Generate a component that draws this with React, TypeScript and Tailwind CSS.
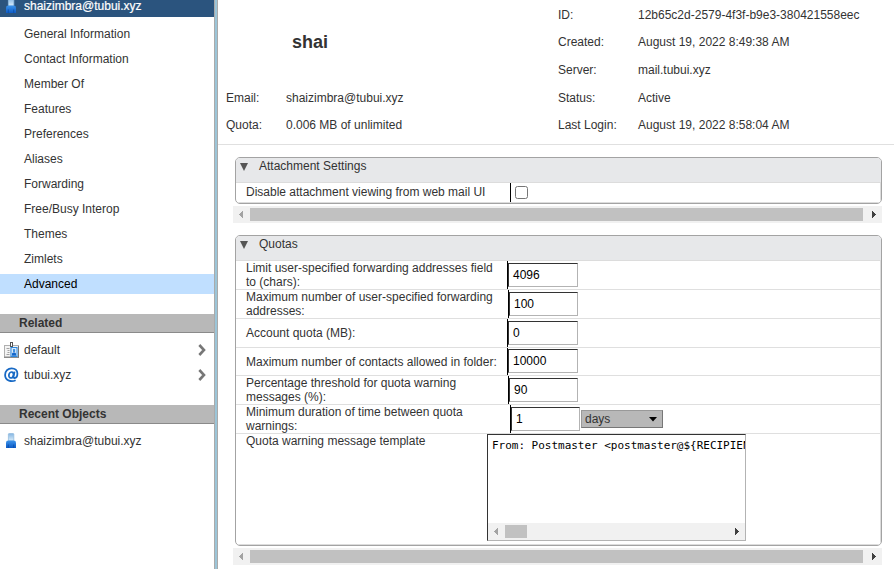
import React from 'react';

const navItems = [
  'General Information',
  'Contact Information',
  'Member Of',
  'Features',
  'Preferences',
  'Aliases',
  'Forwarding',
  'Free/Busy Interop',
  'Themes',
  'Zimlets',
  'Advanced',
];

function PersonIcon() {
  return (
    <svg width="12" height="16" viewBox="0 0 12 16" className="shrink-0">
      <defs>
        <linearGradient id="head" x1="0" y1="0" x2="0" y2="1">
          <stop offset="0" stopColor="#86b6e2" />
          <stop offset="1" stopColor="#dceefa" />
        </linearGradient>
        <linearGradient id="torso" x1="0" y1="0" x2="0" y2="1">
          <stop offset="0" stopColor="#3c93ea" />
          <stop offset="1" stopColor="#0d5bc6" />
        </linearGradient>
      </defs>
      <rect x="3.4" y="0.5" width="5.4" height="7.5" rx="0.8" fill="url(#head)" stroke="#94bde0" strokeWidth="0.8" />
      <path d="M1 10 Q1 7.6 3.2 7.6 H8.8 Q11 7.6 11 10 V15 H1 Z" fill="url(#torso)" />
      <path d="M3.3 11.5 V15 M8.7 11.5 V15" stroke="#0a4ba8" strokeWidth="0.8" />
    </svg>
  );
}

function BadgeIcon() {
  return (
    <svg width="16" height="16" viewBox="0 0 16 16" className="shrink-0">
      <rect x="0.5" y="3.5" width="14" height="11.5" fill="#f4f4f4" stroke="#b0b0b0" />
      <path d="M0 15.3 H15 M14.5 4 V15.5" stroke="#777" />
      <path d="M2.5 6.5 H5.5 M3.5 8.5 H5.5 M3.5 10.5 H5.5 M2.5 12.5 H5.5" stroke="#999" strokeWidth="0.9" />
      <rect x="7" y="5.6" width="6" height="8.8" fill="#fff" stroke="#2583dc" strokeWidth="1.1" />
      <rect x="8.8" y="7" width="2.5" height="3.2" rx="0.6" fill="#3f8fe0" />
      <path d="M8 13.8 V11.6 Q8 10.4 9.2 10.4 H10.9 Q12 10.4 12 11.6 V13.8 Z" fill="#1267cc" />
      <rect x="6.5" y="0.5" width="2" height="4" fill="#fff" stroke="#555" />
    </svg>
  );
}

function AtIcon() {
  return (
    <svg width="16" height="16" viewBox="0 0 16 16" className="shrink-0" fill="none" stroke="#1769c5">
      <path d="M11.6 13.2 C8 15.2 1.1 14.2 1.1 8 C1.1 4 4 1.3 7.6 1.3 C11 1.3 13.4 3.4 13.4 6.6 C13.4 9.4 12 11 10.6 11 C9.6 11 9.3 10.3 9.5 9.3 L10.6 4.6" strokeWidth="1.8" />
      <ellipse cx="7.2" cy="8" rx="2.3" ry="3" transform="rotate(14 7.2 8)" strokeWidth="1.7" />
    </svg>
  );
}

function Chevron() {
  return (
    <svg width="8" height="12" viewBox="0 0 8 12">
      <path d="M1.3 1 L6 6 L1.3 11" fill="none" stroke="#777" strokeWidth="2.6" />
    </svg>
  );
}

function Arrow({ dir }: { dir: 'left' | 'right' }) {
  return (
    <svg width="4" height="7" viewBox="0 0 4 7" className="shrink-0" shapeRendering="crispEdges">
      {dir === 'left' ? <path d="M4 0 V7 L0 3.5 Z" fill="#a3a3a3" /> : <path d="M0 0 V7 L4 3.5 Z" fill="#404040" />}
    </svg>
  );
}

function ScrollBar({ thumb }: { thumb: string }) {
  return (
    <div className="flex h-[17px] items-center bg-[#f1f1f1] pr-[6px] pl-[6px]">
      <Arrow dir="left" />
      <div className={`ml-[7px] h-[13px] bg-[#c1c1c1] ${thumb}`} />
      <div className="ml-auto flex">
        <Arrow dir="right" />
      </div>
    </div>
  );
}

function SectionTitle({ children }: { children: React.ReactNode }) {
  return (
    <div className="h-[19px] border-b border-[#8a8a8a] bg-[#b8b8b8] pl-[19px] leading-[18px] font-bold">{children}</div>
  );
}

function PanelHeader({ title, size }: { title: string; size: string }) {
  return (
    <div className={`flex border-b border-[#dcdcdc] bg-[#e7e8ea] pl-[4px] ${size}`}>
      <svg width="8" height="8" viewBox="0 0 8 8" className="mt-[5px]">
        <path d="M0 0 H8 L4 8 Z" fill="#555" />
      </svg>
      <span className="ml-[11px] leading-4">{title}</span>
    </div>
  );
}

function TextField({ value, width }: { value: string; width: string }) {
  return (
    <div
      className={`h-6 border border-t-[#333] border-r-[#b3b3b3] border-b-[#b3b3b3] border-l-[#333] bg-white pl-1 leading-[22px] text-black ${width}`}
    >
      {value}
    </div>
  );
}

type QuotaRow = { label: string[]; value: string; size: string; labelWidth: string; field: string; unit?: string };

const quotaRows: QuotaRow[] = [
  { label: ['Limit user-specified forwarding addresses field', 'to (chars):'], value: '4096', size: 'h-[29px]', labelWidth: 'w-[271px]', field: 'w-[70px]' },
  { label: ['Maximum number of user-specified forwarding', 'addresses:'], value: '100', size: 'h-[29px]', labelWidth: 'w-[272px]', field: 'w-[69px]' },
  { label: ['Account quota (MB):'], value: '0', size: 'h-[29px]', labelWidth: 'w-[271px]', field: 'w-[70px]' },
  { label: ['Maximum number of contacts allowed in folder:'], value: '10000', size: 'h-[28px]', labelWidth: 'w-[271px]', field: 'w-[70px]' },
  { label: ['Percentage threshold for quota warning', 'messages (%):'], value: '90', size: 'h-[29px]', labelWidth: 'w-[272px]', field: 'w-[69px]' },
  { label: ['Minimum duration of time between quota', 'warnings:'], value: '1', size: 'h-[29px]', labelWidth: 'w-[274px]', field: 'w-[69px]', unit: 'days' },
];

const account = [
  ['ID:', '12b65c2d-2579-4f3f-b9e3-380421558eec', 'h-[27px]'],
  ['Created:', 'August 19, 2022 8:49:38 AM', 'h-[28px]'],
  ['Server:', 'mail.tubui.xyz', 'h-[28px]'],
  ['Status:', 'Active', 'h-[27px]'],
  ['Last Login:', 'August 19, 2022 8:58:04 AM', 'h-[28px]'],
];

function Sidebar() {
  return (
    <aside className="w-[214px] shrink-0">
      <div className="flex h-[17px] items-end overflow-hidden bg-[#2b547e] pl-[5px] text-white">
        <div className="mb-[3px] flex">
          <PersonIcon />
        </div>
        <span className="mb-[3px] ml-[7px] leading-4 [-webkit-text-stroke:0.2px_white]">shaizimbra@tubui.xyz</span>
      </div>
      <nav className="mt-[7px] flex flex-col gap-[5px]">
        {navItems.map((item) => (
          <div
            key={item}
            className={`h-5 pl-6 leading-5 ${item === 'Advanced' ? 'bg-[#c0dfff] text-black' : ''}`}
          >
            {item}
          </div>
        ))}
      </nav>
      <div className="mt-5">
        <SectionTitle>Related</SectionTitle>
        <div className="mt-[7px] flex h-5 items-center pr-[8px] pl-1">
          <BadgeIcon />
          <span className="ml-1">default</span>
          <div className="ml-auto">
            <Chevron />
          </div>
        </div>
        <div className="mt-[5px] flex h-5 items-center pr-[8px] pl-1">
          <AtIcon />
          <span className="ml-1">tubui.xyz</span>
          <div className="ml-auto">
            <Chevron />
          </div>
        </div>
      </div>
      <div className="mt-5">
        <SectionTitle>Recent Objects</SectionTitle>
        <div className="mt-[7px] flex h-5 items-center pl-[5px]">
          <PersonIcon />
          <span className="ml-[7px]">shaizimbra@tubui.xyz</span>
        </div>
      </div>
    </aside>
  );
}

export default function App() {
  return (
    <div className="flex h-[569px] w-[894px] overflow-hidden bg-white font-['Liberation_Sans',Arial,sans-serif] text-[12px] leading-[14px] text-[#333]">
      <Sidebar />
      <div className="w-1 shrink-0 border-x border-[#aaa] bg-[#9cc5d8]" />
      <main className="min-w-0 flex-1">
        <header className="flex h-[145px] border-b border-[#e0e0e0]">
          <div className="w-[332px] pl-2">
            <h1 className="mt-[31px] pl-[66px] text-[18px] leading-[22px] font-bold">shai</h1>
            <div className="mt-[38px] flex h-[27px]">
              <span className="w-[60px]">Email:</span>
              <span>shaizimbra@tubui.xyz</span>
            </div>
            <div className="flex">
              <span className="w-[60px]">Quota:</span>
              <span>0.006 MB of unlimited</span>
            </div>
          </div>
          <div className="pt-2 pl-2">
            {account.map(([label, value, size]) => (
              <div key={label} className={`flex ${size}`}>
                <span className="w-20">{label}</span>
                <span>{value}</span>
              </div>
            ))}
          </div>
        </header>

        <section className="mt-3 ml-[17px] h-[47px] w-[647px] overflow-hidden rounded-[5px] border border-[#a3a3a3]">
          <PanelHeader title="Attachment Settings" size="h-[25px]" />
          <div className="flex h-5 border-r border-b border-[#dcdcdc]">
            <div className="w-[274px] pl-[10px] leading-[19px]">Disable attachment viewing from web mail UI</div>
            <div className="flex items-center border-l border-black pl-1">
              <div className="h-[13px] w-[13px] rounded-[2.5px] border border-[#767676] bg-white" />
            </div>
          </div>
        </section>
        <div className="mt-[2px] ml-[15px] w-[649px]">
          <ScrollBar thumb="w-[613px]" />
        </div>

        <section className="mt-3 ml-[17px] h-[311px] w-[647px] overflow-hidden rounded-[5px] border border-[#a3a3a3]">
          <PanelHeader title="Quotas" size="h-[25px]" />
          <div className="h-[284px] border-r border-b border-[#dcdcdc]">
            {quotaRows.map((row) => (
              <div key={row.value} className={`flex border-b border-[#dfdfdf] ${row.size}`}>
                <div className={`flex shrink-0 flex-col justify-center pl-[10px] whitespace-nowrap ${row.labelWidth}`}>
                  {row.label.map((line) => (
                    <span key={line}>{line}</span>
                  ))}
                </div>
                <div className="flex border-l border-black">
                  <div className={row.size === 'h-[28px]' ? 'pt-px' : 'pt-[2px]'}>
                    <TextField value={row.value} width={row.field} />
                  </div>
                  {row.unit && (
                    <div className="mt-[5px] ml-px flex h-[18px] w-[82px] items-center justify-between border border-t-[#999] border-r-[#777] border-b-[#777] border-l-[#999] bg-[#b8b8b8] pr-[5px] pl-[3px]">
                      <span>{row.unit}</span>
                      <svg width="8" height="5" viewBox="0 0 8 5">
                        <path d="M0 0 H8 L4 4.5 Z" fill="#000" />
                      </svg>
                    </div>
                  )}
                </div>
              </div>
            ))}
            <div className="flex">
              <div className="w-[251px] pl-[10px]">Quota warning message template</div>
              <div className="flex h-[107px] w-[259px] flex-col justify-between border border-t-[#333] border-r-[#b3b3b3] border-b-[#b3b3b3] border-l-[#333]">
                <div className="overflow-hidden pt-[3px] pl-1 font-['DejaVu_Sans_Mono',monospace] text-[11px] leading-[15px] tracking-[-0.02px] whitespace-nowrap text-black">
                  {'From: Postmaster <postmaster@${RECIPIEN'}
                </div>
                <ScrollBar thumb="w-[22px]" />
              </div>
            </div>
          </div>
        </section>
        <div className="mt-[2px] ml-[15px] w-[649px]">
          <ScrollBar thumb="w-[613px]" />
        </div>
      </main>
    </div>
  );
}
